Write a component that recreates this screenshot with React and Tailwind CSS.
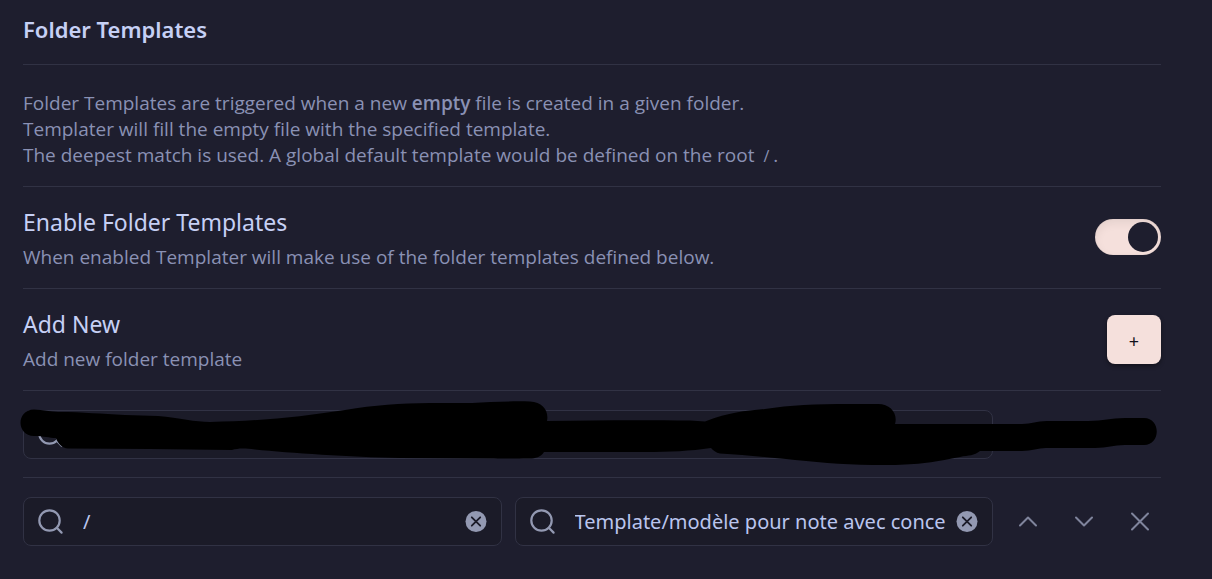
import { useState } from "react";

function SearchIcon() {
  return (
    <svg className="size-7 shrink-0" viewBox="0 0 28 28" fill="none" stroke="#9399b2" strokeWidth="2.2" strokeLinecap="round" aria-hidden="true">
      <circle cx="12.5" cy="12.5" r="10.2" />
      <path d="M19.8 19.8 24.6 24.6" />
    </svg>
  );
}

function SearchField({ label, initial }) {
  const [value, setValue] = useState(initial);
  return (
    <div className="flex h-[49px] min-w-0 flex-1 items-center rounded-lg border border-[#313244] bg-[#1b1b28] pr-3.5 pl-[13px]">
      <SearchIcon />
      <input
        type="text"
        aria-label={label}
        value={value}
        onChange={(e) => setValue(e.target.value)}
        className="ml-[18px] h-full min-w-0 flex-1 bg-transparent text-xl text-[#bac5ee] outline-none"
      />
      <button type="button" aria-label={`Clear ${label}`} onClick={() => setValue("")} className="ml-1 shrink-0">
        <svg className="size-[22px]" viewBox="0 0 22 22" fill="none" aria-hidden="true">
          <circle cx="11" cy="10.5" r="10.5" fill="#9399b2" />
          <path d="M6.8 6.3l8.4 8.4M15.2 6.3l-8.4 8.4" stroke="#1b1b28" strokeWidth="1.8" strokeLinecap="round" />
        </svg>
      </button>
    </div>
  );
}

function IconButton({ label, path }) {
  return (
    <button type="button" aria-label={label} className="flex h-[49px] w-[43px] shrink-0 items-center justify-center">
      <svg className="size-6" viewBox="0 0 24 24" fill="none" stroke="#7f849c" strokeWidth="2" strokeLinecap="round" strokeLinejoin="round" aria-hidden="true">
        <path d={path} />
      </svg>
    </button>
  );
}

function TemplateRow({ name, folder, template, children }) {
  return (
    <div className="relative flex items-center gap-[13px] border-t border-[#313244] pt-[19px] pb-[18px]">
      <SearchField label={`${name} folder`} initial={folder} />
      <SearchField label={`${name} template`} initial={template} />
      <IconButton label="Move up" path="M4 15.5l8-8 8 8" />
      <IconButton label="Move down" path="M4 7.5l8 8 8-8" />
      <IconButton label="Delete" path="M4 3.5l16 16M20 3.5 4 19.5" />
      {children}
    </div>
  );
}

function Redaction() {
  return (
    <svg className="pointer-events-none absolute top-[7px] -left-1 h-[70px] w-[1142px]" viewBox="19 398 1142 70" aria-hidden="true">
      <path
        fill="#000"
        d="M34 409.500C43 409.500 50 412 58 412C85 412 100 414 125 415L158 416C180 418 195 422 210 422C260 421 300 417 345 410C375 405 400 403.500 430 403H472C490 402 510 401 530 401.500C543 402 549 411 547 421C600 420 650 420 690 420.500L705 421.500C730 412 745 411 765 409C790 405 815 404 850 404H878C891 404 898 414 895 424H1022C1032 424 1036 421 1047 421H1088C1104 421 1110 418 1125 418H1144C1161 418 1161 445 1144 445H1125C1113 445 1108 448 1095 448H1046C1038 448 1032 451 1022 451H980C974 456 969 455 960 457C930 463 915 465 885 465C850 465 825 463 795 460C765 457 745 455 720 453.500C716 453 713 450 711 448C690 451 670 452 645 452H544C541 457 535 458.500 530 458.500H500L400 458C350 457 290 453 255 449.500C245 448 238 448 232 450L150 449L68 448.500C62 448 58 444 56 438C49 438 44 436 34 436C16 436 16 409.500 34 409.500Z"
      />
    </svg>
  );
}

export default function App() {
  const [enabled, setEnabled] = useState(true);
  return (
    <main className="min-h-screen bg-[#1e1e2e] pr-[51px] pl-[23px] font-['Noto_Sans','Open_Sans',sans-serif] text-[#c6d0f5]">
      <h1 className="pt-[13px] pb-[19px] text-[22px] leading-8 font-semibold">Folder Templates</h1>

      <p className="border-t border-[#313244] pt-[25px] pb-[18px] font-['Open_Sans','Noto_Sans',sans-serif] text-[19px] leading-[26px] text-[#8a91b4]">
        Folder Templates are triggered when a new <strong className="font-semibold">empty</strong> file is created in a given folder.
        <br />
        Templater will fill the empty file with the specified template.
        <br />
        The deepest match is used. A global default template would be defined on the root <code className="px-1 font-[inherit] text-base">/</code>.
      </p>

      <section className="flex items-center justify-between border-t border-[#313244] pt-[17px] pb-[18px]">
        <div>
          <label htmlFor="enable" className="block text-[23px] leading-9">Enable Folder Templates</label>
          <p id="enable-hint" className="pt-1 font-['Open_Sans','Noto_Sans',sans-serif] text-[19px] leading-[26px] text-[#8a91b4]">
            When enabled Templater will make use of the folder templates defined below.
          </p>
        </div>
        <input
          id="enable"
          type="checkbox"
          role="switch"
          aria-describedby="enable-hint"
          checked={enabled}
          onChange={(e) => setEnabled(e.target.checked)}
          className="h-9 w-[66px] shrink-0 appearance-none rounded-full bg-[#45475a] p-[3px] shadow-[inset_0_4px_10px_rgba(0,0,0,0.07),inset_0_0_1px_rgba(0,0,0,0.21)] before:block before:size-[30px] before:rounded-full before:bg-[#1e1e2e] checked:bg-[#f5e0dc] checked:before:ml-[30px]"
        />
      </section>

      <section className="flex items-center justify-between border-t border-[#313244] pt-[17px] pb-[18px]">
        <div>
          <h2 className="text-[23px] leading-9">Add New</h2>
          <p className="pt-1 font-['Open_Sans','Noto_Sans',sans-serif] text-[19px] leading-[26px] text-[#8a91b4]">Add new folder template</p>
        </div>
        <button
          type="button"
          aria-label="Add new folder template"
          className="h-[49px] w-[54px] shrink-0 rounded-lg bg-[#f5e0dc] pt-1 text-lg text-[#11111b] shadow-[0_2px_4px_rgba(0,0,0,0.4)]"
        >
          +
        </button>
      </section>

      <TemplateRow name="First" folder="" template="">
        <Redaction />
      </TemplateRow>
      <TemplateRow name="Second" folder="/" template="Template/modèle pour note avec conce" />
    </main>
  );
}
